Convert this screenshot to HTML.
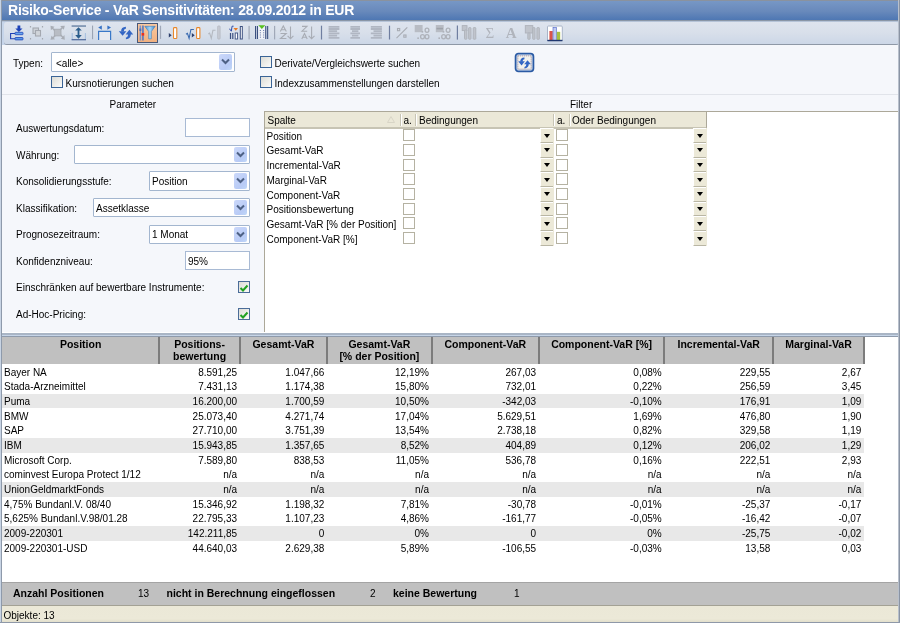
<!DOCTYPE html>
<html><head><meta charset="utf-8">
<style>
*{box-sizing:border-box;margin:0;padding:0}
html,body{width:900px;height:623px;overflow:hidden;background:#f5f7fb;font-family:"Liberation Sans",sans-serif;color:#000}
body{will-change:transform}
.a{position:absolute}
.l{position:absolute;font-size:10px;line-height:12px;white-space:nowrap;margin-top:1px}
.b{position:absolute;font-size:10.5px;line-height:13px;font-weight:bold;white-space:nowrap;margin-top:0.7px}
#frame{position:absolute;left:0;top:0;width:900px;height:623px;border-top:1px solid #8a929e;border-left:1px solid #c8d4e4;}
#title{position:absolute;left:0;top:1px;width:900px;height:19px;background:linear-gradient(#7797c5,#6889bb 55%,#4e77b3)}
#title span{position:absolute;left:8px;top:0;font-size:14px;letter-spacing:-0.235px;font-weight:bold;color:#fff;line-height:19px;white-space:nowrap}
#tb{position:absolute;left:4px;top:22px;width:894.5px;height:23px;background:linear-gradient(#dee4ee,#d8dfea 50%,#ccd7e7);border-bottom:1px solid #8e98a6;border-radius:3px}
.sep{position:absolute;top:26px;width:1px;height:13px;background:#a9b2c2}
.cb{position:absolute;width:12px;height:12px;border:1px solid #3a6496;background:linear-gradient(135deg,#dcdcd6,#fbfbf9)}
.combo{position:absolute;background:#fff;border:1px solid #a3b6cf;border-radius:1px}
.combo .btn{position:absolute;right:2px;top:1px;bottom:1px;width:13px;background:linear-gradient(135deg,#cbd8fa,#b8cbf6 70%,#c0d8f8);border-radius:2px}
.combo .btn svg{position:absolute;left:2px;top:3.8px}
.inp{position:absolute;background:#fff;border:1px solid #a8bad4}
.gcb{position:absolute;width:12px;height:12px;border:1px solid #b5b2a2;background:#fff}
.dd{position:absolute;width:14px;height:14.69px;background:#ece9d8;border-left:1px solid #fff;border-top:1px solid #fff;border-bottom:1px solid #b9b6a4;border-right:1px solid #d4d0be}
.dd:after{content:"";position:absolute;left:2.5px;top:4.5px;border-left:3.5px solid transparent;border-right:3.5px solid transparent;border-top:4.2px solid #000}
.row{position:absolute;left:2px;width:862px;height:14.67px}
.row.g{background:#e8e8e8}
.c{position:absolute;font-size:10px;line-height:12px;white-space:nowrap;top:1.2px}
.r{text-align:right}
</style></head><body>
<div id="frame"></div>
<div id="title"><span>Risiko-Service - VaR Sensitivitäten: 28.09.2012 in EUR</span></div>
<div class="a" style="left:0;top:0;width:900px;height:1px;background:#8a929e"></div>
<div class="a" style="left:0;top:20px;width:900px;height:25px;background:#c6d5ea"></div>
<div class="a" style="left:0;top:20px;width:900px;height:1px;background:#8a96a6"></div>
<div class="a" style="left:0;top:21px;width:900px;height:1px;background:#b6c4d8"></div>
<div id="tb"></div>
<svg class="a" style="left:0;top:0" width="600" height="46" viewBox="0 0 600 46">
<!-- icon1 -->
<g>
<path d="M17.5 25.5h2.8v3h2.2l-3.6 3.6-3.6-3.6h2.2z" fill="#1d43b8"/>
<path d="M10.6 33.5h4.5 M10.6 33 v6.3 M10.6 38.7h4.5" stroke="#1d3fb5" stroke-width="1.1" fill="none"/>
<rect x="15" y="32.3" width="8" height="2.4" rx="0.6" fill="#6aa8f0" stroke="#1d43b8" stroke-width="0.8"/>
<rect x="15" y="37.5" width="8" height="2.4" rx="0.6" fill="#5a9ae8" stroke="#1d43b8" stroke-width="0.8"/>
</g>
<!-- icon2 gray copy -->
<g fill="none" stroke="#a4a8b0" stroke-width="1.1">
<rect x="33" y="28" width="5.5" height="5.5" fill="#cdd1d8"/>
<rect x="35.5" y="30.5" width="5" height="5.5" fill="#d0d4da"/>
<path d="M30.5 26v1.5 M42.5 26v1.5 M30.5 38v1.5 M42.5 38v1.5" stroke-width="1.2"/>
</g>
<!-- icon3 gray square w arrows -->
<g fill="#a9adb5">
<rect x="54.3" y="29.2" width="6.7" height="6.7" fill="#b8bcc4" stroke="#a4a8b0" stroke-width="0.8"/>
<path d="M50.5 25.7l4 1 -1.3 1.3 2 2-1 1-2-2-1.3 1.3z"/>
<path d="M64.8 25.7l-1 4-1.3-1.3-2 2-1-1 2-2-1.3-1.3z"/>
<path d="M50.5 39.7l1-4 1.3 1.3 2-2 1 1-2 2 1.3 1.3z"/>
<path d="M64.8 39.7l-4-1 1.3-1.3-2-2 1-1 2 2 1.3-1.3z"/>
</g>
<!-- icon4 vertical expand -->
<g>
<rect x="71.6" y="25.3" width="14.4" height="1.5" fill="#6f88a8"/>
<path d="M72.2 33v6.6h13.2V33" fill="none" stroke="#a8c0e0" stroke-width="1.1"/>
<rect x="71.6" y="39" width="14.4" height="1.3" fill="#5a72a0"/>
<path d="M78.5 27.3l3.3 3.3h-2.4v4.4h2.4l-3.3 3.7-3.3-3.7h2.4v-4.4h-2.4z" fill="#2b5d8c"/>
</g>
<rect x="92" y="25.6" width="1.1" height="13.6" fill="#9aa4b4"/>
<!-- icon5 frame -->
<g>
<rect x="98.4" y="31" width="12.3" height="9" fill="#e8eaf0"/>
<path d="M98.6 40V31.3h12V40" fill="none" stroke="#3a78c8" stroke-width="1.2"/>
<path d="M98.2 27.6l3.6-2.1v4.2z" fill="#3470c4"/>
<path d="M111 27.6l-3.6-2.1v4.2z" fill="#3470c4"/>
</g>
<!-- icon6 refresh -->
<g fill="#3366c4">
<path d="M118.8 31.2 L126.4 31.2 L122.6 35.8 Z"/>
<path d="M121.1 31.6 C121.1 28.4 122.5 26.9 125.9 26.7 L125.9 28.7 C124.3 28.9 123.9 29.7 123.9 31.6 Z"/>
<path d="M125.6 34.4 L133.2 34.4 L129.4 29.8 Z"/>
<path d="M128 34 C128 36.4 127.5 37.2 125.9 37.5 L125.9 39.2 C129.4 39 130.8 37.3 130.8 34 Z"/>
</g>
<!-- icon7 highlighted filter -->
<g>
<rect x="137.5" y="23.5" width="20" height="19" fill="url(#og)" stroke="#485878" stroke-width="1"/>
<rect x="139.6" y="25.5" width="1.5" height="15" fill="#7a92c8"/>
<rect x="142.2" y="25.5" width="1.5" height="15" fill="#4a72c4"/>
<rect x="139.4" y="28.5" width="1.9" height="2.5" fill="#4a72c4"/>
<rect x="141.6" y="33" width="2.6" height="2.6" fill="#e83020"/>
<path d="M144.8 26.3h10.4l-3.9 5.2v7.3h-2.6v-7.3z" fill="url(#fg)" stroke="#3a80c0" stroke-width="0.6"/>
</g>
<rect x="159.9" y="25.7" width="1.2" height="13.2" fill="#a0a8b8"/>
<!-- icon8 -->
<path d="M168.8 33l2.9 2.3-2.9 2.3z" fill="#2c3e6a"/>
<rect x="173.5" y="27.6" width="3.3" height="10.9" rx="0.8" fill="#fff" stroke="#e8882c" stroke-width="1.1"/>
<!-- icon9 -->
<path d="M186 34.3l1.4-1 1.7 5 1.8-8.8h3" fill="none" stroke="#3a6ab0" stroke-width="1.1"/>
<path d="M191.8 33l2.9 2.3-2.9 2.3z" fill="#2c3e6a"/>
<rect x="196.6" y="27.6" width="3.3" height="10.9" rx="0.8" fill="#fff" stroke="#e8882c" stroke-width="1.1"/>
<!-- icon10 gray -->
<path d="M208.3 34l1.3-0.9 1.7 5.3 1.6-8.1h2.6" fill="none" stroke="#b4b8c0" stroke-width="1.1"/>
<rect x="217.7" y="26" width="2.4" height="13" rx="0.6" fill="#c8ccd4" stroke="#b4b8c0" stroke-width="0.8"/>
<!-- icon11 -->
<g>
<rect x="229.9" y="33" width="1.2" height="6" fill="#3c5080"/>
<rect x="232.2" y="33" width="1.2" height="6" fill="#3c5080"/>
<rect x="235.2" y="33" width="2.4" height="6" fill="#fff" stroke="#3c5080" stroke-width="0.9"/>
<rect x="240.3" y="26.5" width="2" height="12.5" fill="#fff" stroke="#3c5080" stroke-width="1"/>
<path d="M229.3 29l1 0.6 1 1.6 0.8-5h1.5" fill="none" stroke="#2c4aa8" stroke-width="1"/>
<path d="M233.5 28h4.5l-2.25 2.8z" fill="#e87820"/>
</g>
<rect x="248.5" y="25.9" width="1.2" height="13.5" fill="#a0a8b8"/>
<!-- icon12 -->
<g>
<rect x="255" y="26" width="1.1" height="13" fill="#3c5080"/>
<rect x="256.9" y="26" width="1.1" height="13" fill="#3c5080"/>
<rect x="265.2" y="26" width="1.1" height="13" fill="#3c5080"/>
<rect x="267.1" y="26" width="1.1" height="13" fill="#3c5080"/>
<rect x="258.5" y="26" width="6.4" height="13" fill="#f0f2f8"/>
<path d="M259.8 30.5h1.2 M263 30.5h1.2 M259.8 32.8h1.2 M263 32.8h1.2 M259.8 35h1.2 M263 35h1.2 M259.8 37.2h1.2 M263 37.2h1.2" stroke="#6a7ca8" stroke-width="0.9"/>
<path d="M258.4 25.3h6.9l-3.45 3.6z" fill="#58c020"/>
</g>
<rect x="274" y="25.9" width="1.2" height="13.5" fill="#a0a8b8"/>
<!-- icon13 A-Z -->
<g fill="none" stroke="#a8acb4" stroke-width="1.1">
<path d="M280.3 31.6l3-5.6 3 5.6 M281.4 29.8h3.8"/>
<path d="M280.5 33.5h5.7l-5.7 5h5.9"/>
<path d="M290.5 26.5v12 M287.6 35.8l2.9 3 2.9-3"/>
</g>
<!-- icon14 Z-A -->
<g fill="none" stroke="#a8acb4" stroke-width="1.1">
<path d="M302 26.4h5l-5 4.8h5.2"/>
<path d="M301.8 39l2.7-5.6 2.7 5.6 M302.8 37.2h3.5"/>
<path d="M311.6 26.5v12 M308.7 35.8l2.9 3 2.9-3"/>
</g>
<rect x="320.9" y="25.7" width="1.2" height="13.8" fill="#6f7ea0"/>
<!-- align icons -->
<g stroke="#b0b6c2" stroke-width="1.8">
<path d="M328.6 26.8h10.8 M328.6 29h10.8 M328.6 31.2h8.5 M328.6 33.4h10.8 M328.6 35.6h8.5 M328.6 37.8h10.8"/>
<path d="M350.4 26.8h9.6 M350.4 29h9.6 M352 31.2h6.4 M350.4 33.4h9.6 M352 35.6h6.4 M350.4 37.8h9.6"/>
<path d="M370.8 26.8h11.1 M370.8 29h11.1 M373.5 31.2h8.4 M370.8 33.4h11.1 M373.5 35.6h8.4 M370.8 37.8h11.1"/>
</g>
<rect x="388.9" y="25.7" width="1.2" height="13.8" fill="#6f7ea0"/>
<!-- % -->
<g fill="none" stroke="#a8acb4" stroke-width="1.1">
<path d="M396.5 38.2l10.8-10.8"/>
<rect x="397.5" y="28.5" width="2.2" height="2.2"/>
<rect x="403.8" y="35" width="2.2" height="2.2"/>
</g>
<!-- .00 icons -->
<g>
<rect x="414.7" y="25" width="7.9" height="7.2" fill="#b8bcc4"/>
<rect x="435.8" y="25" width="7.9" height="7.2" fill="#b8bcc4"/>
<rect x="436.5" y="27.8" width="6.5" height="1.6" fill="#9ea2aa"/>
<rect x="421.6" y="31" width="1.6" height="1.6" fill="#aeb2ba"/>
<ellipse cx="427" cy="30.3" rx="1.9" ry="2.1" fill="none" stroke="#aeb2ba" stroke-width="1.3"/>
<rect x="417.3" y="37.4" width="1.6" height="1.6" fill="#aeb2ba"/>
<ellipse cx="422.5" cy="36.8" rx="1.9" ry="2.1" fill="none" stroke="#aeb2ba" stroke-width="1.3"/>
<ellipse cx="427" cy="36.8" rx="1.9" ry="2.1" fill="none" stroke="#aeb2ba" stroke-width="1.3"/>
<rect x="442.70000000000005" y="31" width="1.6" height="1.6" fill="#aeb2ba"/>
<ellipse cx="448.1" cy="30.3" rx="1.9" ry="2.1" fill="none" stroke="#aeb2ba" stroke-width="1.3"/>
<rect x="438.40000000000003" y="37.4" width="1.6" height="1.6" fill="#aeb2ba"/>
<ellipse cx="443.6" cy="36.8" rx="1.9" ry="2.1" fill="none" stroke="#aeb2ba" stroke-width="1.3"/>
<ellipse cx="448.1" cy="36.8" rx="1.9" ry="2.1" fill="none" stroke="#aeb2ba" stroke-width="1.3"/>
</g>
<rect x="456.8" y="25.5" width="1.2" height="14.1" fill="#6f7ea0"/>
<!-- bars gray -->
<g fill="#c0c4cc" stroke="#aeb2ba" stroke-width="0.9">
<rect x="462.2" y="25.6" width="4.8" height="5" />
<rect x="464.5" y="30" width="2.4" height="9.2" rx="0.6"/>
<rect x="468.6" y="27.6" width="2.4" height="11.6" rx="0.6"/>
<rect x="473.2" y="27.6" width="2.6" height="11.6" rx="0.6"/>
</g>
<text x="485.5" y="37.9" font-family="Liberation Serif" font-size="15" fill="#b0b4bc">Σ</text>
<text x="505.8" y="38.2" font-family="Liberation Serif" font-size="15" font-weight="bold" fill="#b0b4bc">A</text>
<g fill="#c0c4cc" stroke="#aeb2ba" stroke-width="0.9">
<rect x="525.3" y="25.6" width="7.5" height="7.4"/>
<rect x="527.8" y="33" width="2.3" height="6.3" rx="0.6"/>
<rect x="532.7" y="27.6" width="2.3" height="11.7" rx="0.6"/>
<rect x="536.9" y="27.6" width="2.5" height="11.7" rx="0.6"/>
</g>
<!-- chart -->
<g>
<rect x="547.5" y="26" width="14.8" height="14.8" rx="1" fill="#fff" stroke="#a8b4c8" stroke-width="1"/>
<rect x="549.4" y="31" width="3.3" height="9.3" fill="#d9534a"/>
<rect x="553" y="27.4" width="3.4" height="12.9" fill="#c0cbf0" stroke="#4a62c8" stroke-width="0.6"/>
<rect x="556.8" y="31.8" width="3.4" height="8.5" fill="#a8c040"/>
<rect x="547.3" y="39.8" width="15.2" height="1.4" fill="#203870"/>
</g>
<defs><linearGradient id="fg" x1="0" y1="0" x2="1" y2="0"><stop offset="0" stop-color="#4a90d0"/><stop offset="0.5" stop-color="#a8d8f8"/><stop offset="1" stop-color="#3a80c8"/></linearGradient><linearGradient id="og" x1="0" y1="0" x2="0" y2="1"><stop offset="0" stop-color="#fac9a0"/><stop offset="1" stop-color="#f0b080"/></linearGradient></defs>
</svg>


<!-- left/right borders -->
<div class="a" style="left:0;top:0;width:1px;height:623px;background:#c8d4e4"></div>
<div class="a" style="left:1px;top:0;width:1px;height:623px;background:#8e9aab"></div>
<div class="a" style="left:898px;top:0;width:1px;height:623px;background:#b8c0cc"></div>
<div class="a" style="left:899px;top:0;width:1px;height:623px;background:#8a94a4"></div>

<!-- top form -->
<div class="l" style="left:13px;top:56.5px">Typen:</div>
<div class="combo" style="left:51px;top:52px;width:184px;height:20px"><div class="btn"><svg width="9" height="7" viewBox="0 0 9 7"><path d="M1 1.5 L4.5 5 L8 1.5" stroke="#4d6185" stroke-width="2" fill="none"/></svg></div></div>
<div class="l" style="left:56px;top:56.5px">&lt;alle&gt;</div>
<div class="cb" style="left:51px;top:76px"></div>
<div class="l" style="left:65.5px;top:77px">Kursnotierungen suchen</div>
<div class="cb" style="left:260px;top:56px"></div>
<div class="l" style="left:274.5px;top:56.5px">Derivate/Vergleichswerte suchen</div>
<div class="cb" style="left:260px;top:76px"></div>
<div class="l" style="left:274.5px;top:76.5px">Indexzusammenstellungen darstellen</div>
<svg class="a" style="left:514px;top:52px" width="21" height="21" viewBox="0 0 21 21">
<rect x="1.6" y="1.6" width="17.8" height="17.8" rx="2.8" fill="#f2f2ee" stroke="#2a5aa4" stroke-width="1.8"/>
<rect x="3" y="3" width="15" height="15" rx="1" fill="none" stroke="#7aa0d8" stroke-width="0.6"/>
<rect x="3.9" y="3.9" width="13.2" height="13.2" fill="none" stroke="#a07878" stroke-width="0.7" stroke-dasharray="1,1"/>
<g fill="#3366c4" transform="translate(4.2,5.4) scale(0.88) translate(-118.8,-26.7)">
<path d="M118.8 31.2 L126.4 31.2 L122.6 35.8 Z"/>
<path d="M121.1 31.6 C121.1 28.4 122.5 26.9 125.9 26.7 L125.9 28.7 C124.3 28.9 123.9 29.7 123.9 31.6 Z"/>
<path d="M125.6 34.4 L133.2 34.4 L129.4 29.8 Z"/>
<path d="M128 34 C128 36.4 127.5 37.2 125.9 37.5 L125.9 39.2 C129.4 39 130.8 37.3 130.8 34 Z"/>
</g>
</svg>
<div class="a" style="left:2px;top:94px;width:896px;height:1px;background:#e1e4ea"></div>

<!-- parameter -->
<div class="l" style="left:109.5px;top:97.5px">Parameter</div>
<div class="l" style="left:570px;top:97.5px">Filter</div>
<div class="l" style="left:16px;top:122px">Auswertungsdatum:</div>
<div class="inp" style="left:185px;top:118px;width:65px;height:19px"></div>
<div class="l" style="left:16px;top:149px">Währung:</div>
<div class="combo" style="left:74px;top:145px;width:176px;height:19px"><div class="btn"><svg width="9" height="7" viewBox="0 0 9 7"><path d="M1 1.5 L4.5 5 L8 1.5" stroke="#4d6185" stroke-width="2" fill="none"/></svg></div></div>
<div class="l" style="left:16px;top:175.3px">Konsolidierungsstufe:</div>
<div class="combo" style="left:148.5px;top:171px;width:101px;height:20px"><div class="btn"><svg width="9" height="7" viewBox="0 0 9 7"><path d="M1 1.5 L4.5 5 L8 1.5" stroke="#4d6185" stroke-width="2" fill="none"/></svg></div></div>
<div class="l" style="left:152px;top:175.3px">Position</div>
<div class="l" style="left:16px;top:201.8px">Klassifikation:</div>
<div class="combo" style="left:93px;top:198px;width:157px;height:19px"><div class="btn"><svg width="9" height="7" viewBox="0 0 9 7"><path d="M1 1.5 L4.5 5 L8 1.5" stroke="#4d6185" stroke-width="2" fill="none"/></svg></div></div>
<div class="l" style="left:96px;top:201.8px">Assetklasse</div>
<div class="l" style="left:16px;top:228.3px">Prognosezeitraum:</div>
<div class="combo" style="left:148.5px;top:225px;width:101px;height:19px"><div class="btn"><svg width="9" height="7" viewBox="0 0 9 7"><path d="M1 1.5 L4.5 5 L8 1.5" stroke="#4d6185" stroke-width="2" fill="none"/></svg></div></div>
<div class="l" style="left:152px;top:228.3px">1 Monat</div>
<div class="l" style="left:16px;top:254.7px">Konfidenzniveau:</div>
<div class="inp" style="left:185px;top:251px;width:65px;height:19px"></div>
<div class="l" style="left:188px;top:254.7px">95%</div>
<div class="l" style="left:16px;top:281.1px">Einschränken auf bewertbare Instrumente:</div>
<div class="cb" style="left:237.5px;top:281px;border-color:#4a6c98"><svg class="a" style="left:0.5px;top:0.5px" width="10" height="10" viewBox="0 0 10 10"><path d="M1.5 5 L4 7.5 L8.5 2.5" stroke="#21a121" stroke-width="2" fill="none"/></svg></div>
<div class="l" style="left:16px;top:307.5px">Ad-Hoc-Pricing:</div>
<div class="cb" style="left:237.5px;top:308px;border-color:#4a6c98"><svg class="a" style="left:0.5px;top:0.5px" width="10" height="10" viewBox="0 0 10 10"><path d="M1.5 5 L4 7.5 L8.5 2.5" stroke="#21a121" stroke-width="2" fill="none"/></svg></div>

<!-- filter grid -->
<div class="a" style="left:264px;top:111px;width:634px;height:222px;background:#fff;border-top:1px solid #aca899;border-left:1px solid #aca899"></div>
<div class="a" style="left:265px;top:112px;width:442px;height:16.5px;background:#ebe8d8;border-bottom:2px solid #c7c4b4;border-right:1px solid #aca899"></div>
<div class="l" style="left:267.5px;top:113.80px">Spalte</div>
<div class="l" style="left:403.5px;top:113.80px">a.</div>
<div class="l" style="left:419px;top:113.80px">Bedingungen</div>
<div class="l" style="left:557px;top:113.80px">a.</div>
<div class="l" style="left:572px;top:113.80px">Oder Bedingungen</div>
<div class="a" style="left:400px;top:114px;width:1px;height:12px;background:#c7c4b4"></div>
<div class="a" style="left:401px;top:114px;width:1px;height:12px;background:#fff"></div>
<div class="a" style="left:415px;top:114px;width:1px;height:12px;background:#c7c4b4"></div>
<div class="a" style="left:416px;top:114px;width:1px;height:12px;background:#fff"></div>
<div class="a" style="left:553px;top:114px;width:1px;height:12px;background:#c7c4b4"></div>
<div class="a" style="left:554px;top:114px;width:1px;height:12px;background:#fff"></div>
<div class="a" style="left:569px;top:114px;width:1px;height:12px;background:#c7c4b4"></div>
<div class="a" style="left:570px;top:114px;width:1px;height:12px;background:#fff"></div>
<svg class="a" style="left:387px;top:116px" width="8" height="7" viewBox="0 0 8 7"><path d="M4 0.5 L7.5 6.5 L0.5 6.5 Z" fill="none" stroke="#d8d5c6" stroke-width="1"/></svg>
<div class="l" style="left:266.5px;top:129.80px">Position</div>
<div class="gcb" style="left:403px;top:129.20px"></div>
<div class="gcb" style="left:556px;top:129.20px"></div>
<div class="dd" style="left:540px;top:128.20px"></div>
<div class="dd" style="left:693px;top:128.20px"></div>
<div class="l" style="left:266.5px;top:144.49px">Gesamt-VaR</div>
<div class="gcb" style="left:403px;top:143.89px"></div>
<div class="gcb" style="left:556px;top:143.89px"></div>
<div class="dd" style="left:540px;top:142.89px"></div>
<div class="dd" style="left:693px;top:142.89px"></div>
<div class="l" style="left:266.5px;top:159.18px">Incremental-VaR</div>
<div class="gcb" style="left:403px;top:158.58px"></div>
<div class="gcb" style="left:556px;top:158.58px"></div>
<div class="dd" style="left:540px;top:157.58px"></div>
<div class="dd" style="left:693px;top:157.58px"></div>
<div class="l" style="left:266.5px;top:173.87px">Marginal-VaR</div>
<div class="gcb" style="left:403px;top:173.27px"></div>
<div class="gcb" style="left:556px;top:173.27px"></div>
<div class="dd" style="left:540px;top:172.27px"></div>
<div class="dd" style="left:693px;top:172.27px"></div>
<div class="l" style="left:266.5px;top:188.56px">Component-VaR</div>
<div class="gcb" style="left:403px;top:187.96px"></div>
<div class="gcb" style="left:556px;top:187.96px"></div>
<div class="dd" style="left:540px;top:186.96px"></div>
<div class="dd" style="left:693px;top:186.96px"></div>
<div class="l" style="left:266.5px;top:203.25px">Positionsbewertung</div>
<div class="gcb" style="left:403px;top:202.65px"></div>
<div class="gcb" style="left:556px;top:202.65px"></div>
<div class="dd" style="left:540px;top:201.65px"></div>
<div class="dd" style="left:693px;top:201.65px"></div>
<div class="l" style="left:266.5px;top:217.94px">Gesamt-VaR [% der Position]</div>
<div class="gcb" style="left:403px;top:217.34px"></div>
<div class="gcb" style="left:556px;top:217.34px"></div>
<div class="dd" style="left:540px;top:216.34px"></div>
<div class="dd" style="left:693px;top:216.34px"></div>
<div class="l" style="left:266.5px;top:232.63px">Component-VaR [%]</div>
<div class="gcb" style="left:403px;top:232.03px"></div>
<div class="gcb" style="left:556px;top:232.03px"></div>
<div class="dd" style="left:540px;top:231.03px"></div>
<div class="dd" style="left:693px;top:231.03px"></div>
<div class="a" style="left:553px;top:128px;width:1px;height:117.5px;background:#ece9d8"></div>
<div class="a" style="left:706px;top:128px;width:1px;height:117.5px;background:#ece9d8"></div>

<!-- splitter -->
<div class="a" style="left:2px;top:332px;width:896px;height:1px;background:#fff"></div>
<div class="a" style="left:2px;top:333px;width:896px;height:1.5px;background:#a9b5c5"></div>
<div class="a" style="left:2px;top:334.5px;width:896px;height:1.5px;background:#c6d5e8"></div>
<div class="a" style="left:2px;top:336px;width:896px;height:1px;background:#8e9aab"></div>

<!-- data table -->
<div class="a" style="left:2px;top:337px;width:896px;height:245px;background:#fff"></div>
<div class="a" style="left:2px;top:337px;width:862px;height:27.4px;background:#c0c0c0"></div>
<div class="b" style="left:2px;width:157.3px;text-align:center;top:336.86px">Position</div>
<div class="b" style="left:159.3px;width:80.5px;text-align:center;top:336.86px">Positions-</div>
<div class="b" style="left:159.3px;width:80.5px;text-align:center;top:349.56px">bewertung</div>
<div class="b" style="left:239.8px;width:87.19999999999999px;text-align:center;top:336.86px">Gesamt-VaR</div>
<div class="b" style="left:327px;width:104.69999999999999px;text-align:center;top:336.86px">Gesamt-VaR</div>
<div class="b" style="left:327px;width:104.69999999999999px;text-align:center;top:349.56px">[% der Position]</div>
<div class="b" style="left:431.7px;width:107.09999999999997px;text-align:center;top:336.86px">Component-VaR</div>
<div class="b" style="left:538.8px;width:125.60000000000002px;text-align:center;top:336.86px">Component-VaR [%]</div>
<div class="b" style="left:664.4px;width:108.60000000000002px;text-align:center;top:336.86px">Incremental-VaR</div>
<div class="b" style="left:773px;width:91px;text-align:center;top:336.86px">Marginal-VaR</div>
<div class="a" style="left:158.3px;top:337px;width:2px;height:27.4px;background:#7c7c7c"></div>
<div class="a" style="left:238.8px;top:337px;width:2px;height:27.4px;background:#7c7c7c"></div>
<div class="a" style="left:326px;top:337px;width:2px;height:27.4px;background:#7c7c7c"></div>
<div class="a" style="left:430.7px;top:337px;width:2px;height:27.4px;background:#7c7c7c"></div>
<div class="a" style="left:537.8px;top:337px;width:2px;height:27.4px;background:#7c7c7c"></div>
<div class="a" style="left:663.4px;top:337px;width:2px;height:27.4px;background:#7c7c7c"></div>
<div class="a" style="left:772px;top:337px;width:2px;height:27.4px;background:#7c7c7c"></div>
<div class="a" style="left:863px;top:337px;width:2px;height:27.4px;background:#7c7c7c"></div>
<div class="row" style="top:364.50px"></div>
<div class="l" style="left:4px;top:365.70px">Bayer NA</div>
<div class="l" style="left:89.80000000000001px;width:147.3px;text-align:right;top:365.70px">8.591,25</div>
<div class="l" style="left:177px;width:147.3px;text-align:right;top:365.70px">1.047,66</div>
<div class="l" style="left:281.7px;width:147.3px;text-align:right;top:365.70px">12,19%</div>
<div class="l" style="left:388.79999999999995px;width:147.3px;text-align:right;top:365.70px">267,03</div>
<div class="l" style="left:514.4px;width:147.3px;text-align:right;top:365.70px">0,08%</div>
<div class="l" style="left:623px;width:147.3px;text-align:right;top:365.70px">229,55</div>
<div class="l" style="left:714px;width:147.3px;text-align:right;top:365.70px">2,67</div>
<div class="row" style="top:379.17px"></div>
<div class="l" style="left:4px;top:380.37px">Stada-Arzneimittel</div>
<div class="l" style="left:89.80000000000001px;width:147.3px;text-align:right;top:380.37px">7.431,13</div>
<div class="l" style="left:177px;width:147.3px;text-align:right;top:380.37px">1.174,38</div>
<div class="l" style="left:281.7px;width:147.3px;text-align:right;top:380.37px">15,80%</div>
<div class="l" style="left:388.79999999999995px;width:147.3px;text-align:right;top:380.37px">732,01</div>
<div class="l" style="left:514.4px;width:147.3px;text-align:right;top:380.37px">0,22%</div>
<div class="l" style="left:623px;width:147.3px;text-align:right;top:380.37px">256,59</div>
<div class="l" style="left:714px;width:147.3px;text-align:right;top:380.37px">3,45</div>
<div class="row g" style="top:393.84px"></div>
<div class="l" style="left:4px;top:395.04px">Puma</div>
<div class="l" style="left:89.80000000000001px;width:147.3px;text-align:right;top:395.04px">16.200,00</div>
<div class="l" style="left:177px;width:147.3px;text-align:right;top:395.04px">1.700,59</div>
<div class="l" style="left:281.7px;width:147.3px;text-align:right;top:395.04px">10,50%</div>
<div class="l" style="left:388.79999999999995px;width:147.3px;text-align:right;top:395.04px">-342,03</div>
<div class="l" style="left:514.4px;width:147.3px;text-align:right;top:395.04px">-0,10%</div>
<div class="l" style="left:623px;width:147.3px;text-align:right;top:395.04px">176,91</div>
<div class="l" style="left:714px;width:147.3px;text-align:right;top:395.04px">1,09</div>
<div class="row" style="top:408.51px"></div>
<div class="l" style="left:4px;top:409.71px">BMW</div>
<div class="l" style="left:89.80000000000001px;width:147.3px;text-align:right;top:409.71px">25.073,40</div>
<div class="l" style="left:177px;width:147.3px;text-align:right;top:409.71px">4.271,74</div>
<div class="l" style="left:281.7px;width:147.3px;text-align:right;top:409.71px">17,04%</div>
<div class="l" style="left:388.79999999999995px;width:147.3px;text-align:right;top:409.71px">5.629,51</div>
<div class="l" style="left:514.4px;width:147.3px;text-align:right;top:409.71px">1,69%</div>
<div class="l" style="left:623px;width:147.3px;text-align:right;top:409.71px">476,80</div>
<div class="l" style="left:714px;width:147.3px;text-align:right;top:409.71px">1,90</div>
<div class="row" style="top:423.18px"></div>
<div class="l" style="left:4px;top:424.38px">SAP</div>
<div class="l" style="left:89.80000000000001px;width:147.3px;text-align:right;top:424.38px">27.710,00</div>
<div class="l" style="left:177px;width:147.3px;text-align:right;top:424.38px">3.751,39</div>
<div class="l" style="left:281.7px;width:147.3px;text-align:right;top:424.38px">13,54%</div>
<div class="l" style="left:388.79999999999995px;width:147.3px;text-align:right;top:424.38px">2.738,18</div>
<div class="l" style="left:514.4px;width:147.3px;text-align:right;top:424.38px">0,82%</div>
<div class="l" style="left:623px;width:147.3px;text-align:right;top:424.38px">329,58</div>
<div class="l" style="left:714px;width:147.3px;text-align:right;top:424.38px">1,19</div>
<div class="row g" style="top:437.85px"></div>
<div class="l" style="left:4px;top:439.05px">IBM</div>
<div class="l" style="left:89.80000000000001px;width:147.3px;text-align:right;top:439.05px">15.943,85</div>
<div class="l" style="left:177px;width:147.3px;text-align:right;top:439.05px">1.357,65</div>
<div class="l" style="left:281.7px;width:147.3px;text-align:right;top:439.05px">8,52%</div>
<div class="l" style="left:388.79999999999995px;width:147.3px;text-align:right;top:439.05px">404,89</div>
<div class="l" style="left:514.4px;width:147.3px;text-align:right;top:439.05px">0,12%</div>
<div class="l" style="left:623px;width:147.3px;text-align:right;top:439.05px">206,02</div>
<div class="l" style="left:714px;width:147.3px;text-align:right;top:439.05px">1,29</div>
<div class="row" style="top:452.52px"></div>
<div class="l" style="left:4px;top:453.72px">Microsoft Corp.</div>
<div class="l" style="left:89.80000000000001px;width:147.3px;text-align:right;top:453.72px">7.589,80</div>
<div class="l" style="left:177px;width:147.3px;text-align:right;top:453.72px">838,53</div>
<div class="l" style="left:281.7px;width:147.3px;text-align:right;top:453.72px">11,05%</div>
<div class="l" style="left:388.79999999999995px;width:147.3px;text-align:right;top:453.72px">536,78</div>
<div class="l" style="left:514.4px;width:147.3px;text-align:right;top:453.72px">0,16%</div>
<div class="l" style="left:623px;width:147.3px;text-align:right;top:453.72px">222,51</div>
<div class="l" style="left:714px;width:147.3px;text-align:right;top:453.72px">2,93</div>
<div class="row" style="top:467.19px"></div>
<div class="l" style="left:4px;top:468.39px">cominvest Europa Protect 1/12</div>
<div class="l" style="left:89.80000000000001px;width:147.3px;text-align:right;top:468.39px">n/a</div>
<div class="l" style="left:177px;width:147.3px;text-align:right;top:468.39px">n/a</div>
<div class="l" style="left:281.7px;width:147.3px;text-align:right;top:468.39px">n/a</div>
<div class="l" style="left:388.79999999999995px;width:147.3px;text-align:right;top:468.39px">n/a</div>
<div class="l" style="left:514.4px;width:147.3px;text-align:right;top:468.39px">n/a</div>
<div class="l" style="left:623px;width:147.3px;text-align:right;top:468.39px">n/a</div>
<div class="l" style="left:714px;width:147.3px;text-align:right;top:468.39px">n/a</div>
<div class="row g" style="top:481.86px"></div>
<div class="l" style="left:4px;top:483.06px">UnionGeldmarktFonds</div>
<div class="l" style="left:89.80000000000001px;width:147.3px;text-align:right;top:483.06px">n/a</div>
<div class="l" style="left:177px;width:147.3px;text-align:right;top:483.06px">n/a</div>
<div class="l" style="left:281.7px;width:147.3px;text-align:right;top:483.06px">n/a</div>
<div class="l" style="left:388.79999999999995px;width:147.3px;text-align:right;top:483.06px">n/a</div>
<div class="l" style="left:514.4px;width:147.3px;text-align:right;top:483.06px">n/a</div>
<div class="l" style="left:623px;width:147.3px;text-align:right;top:483.06px">n/a</div>
<div class="l" style="left:714px;width:147.3px;text-align:right;top:483.06px">n/a</div>
<div class="row" style="top:496.53px"></div>
<div class="l" style="left:4px;top:497.73px">4,75% Bundanl.V. 08/40</div>
<div class="l" style="left:89.80000000000001px;width:147.3px;text-align:right;top:497.73px">15.346,92</div>
<div class="l" style="left:177px;width:147.3px;text-align:right;top:497.73px">1.198,32</div>
<div class="l" style="left:281.7px;width:147.3px;text-align:right;top:497.73px">7,81%</div>
<div class="l" style="left:388.79999999999995px;width:147.3px;text-align:right;top:497.73px">-30,78</div>
<div class="l" style="left:514.4px;width:147.3px;text-align:right;top:497.73px">-0,01%</div>
<div class="l" style="left:623px;width:147.3px;text-align:right;top:497.73px">-25,37</div>
<div class="l" style="left:714px;width:147.3px;text-align:right;top:497.73px">-0,17</div>
<div class="row" style="top:511.20px"></div>
<div class="l" style="left:4px;top:512.40px">5,625% Bundanl.V.98/01.28</div>
<div class="l" style="left:89.80000000000001px;width:147.3px;text-align:right;top:512.40px">22.795,33</div>
<div class="l" style="left:177px;width:147.3px;text-align:right;top:512.40px">1.107,23</div>
<div class="l" style="left:281.7px;width:147.3px;text-align:right;top:512.40px">4,86%</div>
<div class="l" style="left:388.79999999999995px;width:147.3px;text-align:right;top:512.40px">-161,77</div>
<div class="l" style="left:514.4px;width:147.3px;text-align:right;top:512.40px">-0,05%</div>
<div class="l" style="left:623px;width:147.3px;text-align:right;top:512.40px">-16,42</div>
<div class="l" style="left:714px;width:147.3px;text-align:right;top:512.40px">-0,07</div>
<div class="row g" style="top:525.87px"></div>
<div class="l" style="left:4px;top:527.07px">2009-220301</div>
<div class="l" style="left:89.80000000000001px;width:147.3px;text-align:right;top:527.07px">142.211,85</div>
<div class="l" style="left:177px;width:147.3px;text-align:right;top:527.07px">0</div>
<div class="l" style="left:281.7px;width:147.3px;text-align:right;top:527.07px">0%</div>
<div class="l" style="left:388.79999999999995px;width:147.3px;text-align:right;top:527.07px">0</div>
<div class="l" style="left:514.4px;width:147.3px;text-align:right;top:527.07px">0%</div>
<div class="l" style="left:623px;width:147.3px;text-align:right;top:527.07px">-25,75</div>
<div class="l" style="left:714px;width:147.3px;text-align:right;top:527.07px">-0,02</div>
<div class="row" style="top:540.54px"></div>
<div class="l" style="left:4px;top:541.74px">2009-220301-USD</div>
<div class="l" style="left:89.80000000000001px;width:147.3px;text-align:right;top:541.74px">44.640,03</div>
<div class="l" style="left:177px;width:147.3px;text-align:right;top:541.74px">2.629,38</div>
<div class="l" style="left:281.7px;width:147.3px;text-align:right;top:541.74px">5,89%</div>
<div class="l" style="left:388.79999999999995px;width:147.3px;text-align:right;top:541.74px">-106,55</div>
<div class="l" style="left:514.4px;width:147.3px;text-align:right;top:541.74px">-0,03%</div>
<div class="l" style="left:623px;width:147.3px;text-align:right;top:541.74px">13,58</div>
<div class="l" style="left:714px;width:147.3px;text-align:right;top:541.74px">0,03</div>

<!-- summary -->
<div class="a" style="left:2px;top:582px;width:896px;height:23px;background:#c0c0c0;border-top:1px solid #a4a4a4"></div>
<div class="b" style="left:13px;top:586.2px">Anzahl Positionen</div>
<div class="l" style="left:138px;top:587px">13</div>
<div class="b" style="left:166.5px;top:586.2px">nicht in Berechnung eingeflossen</div>
<div class="l" style="left:370px;top:587px">2</div>
<div class="b" style="left:393px;top:586.2px">keine Bewertung</div>
<div class="l" style="left:514px;top:587px">1</div>

<!-- status -->
<div class="a" style="left:2px;top:604.5px;width:896px;height:17.5px;background:linear-gradient(#ebe8d7,#ece9d8 80%,#e2dfcc);border-top:1.5px solid #a3a194"></div>
<div class="l" style="left:3.5px;top:609px">Objekte: 13</div>
<div class="a" style="left:0;top:621.5px;width:900px;height:1.5px;background:#8e98a8"></div>
</body></html>
